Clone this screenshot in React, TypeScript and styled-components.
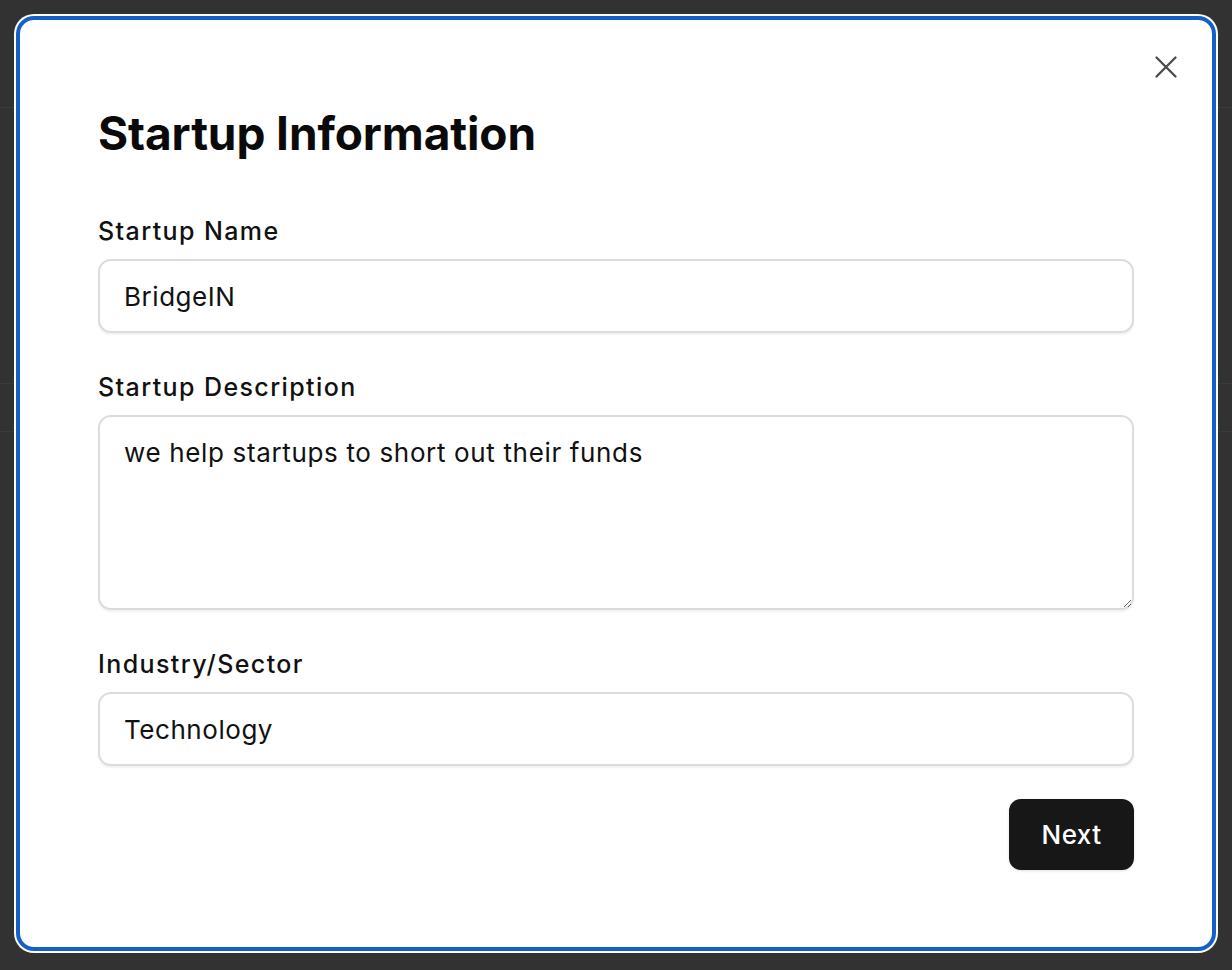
import React from "react";
import styled, { createGlobalStyle } from "styled-components";

const GlobalStyle = createGlobalStyle`
  html, body {
    margin: 0;
    padding: 0;
  }
  body {
    background-color: #323232;
    background-image:
      linear-gradient(#3a3a3a, #3a3a3a),
      linear-gradient(#3a3a3a, #3a3a3a),
      linear-gradient(#3a3a3a, #3a3a3a);
    background-size: 100% 1px;
    background-repeat: no-repeat;
    background-position: 0 107px, 0 383px, 0 431px;
    font-family: Inter, "Noto Sans", "Liberation Sans", sans-serif;
    -webkit-font-smoothing: antialiased;
  }
  * { box-sizing: border-box; }
`;

const Screen = styled.div`
  min-height: 970px;
  padding: 16px;
  display: flex;
  justify-content: center;
  align-items: flex-start;
`;

const Dialog = styled.div`
  position: relative;
  width: 1200px;
  height: 935px;
  background: #ffffff;
  border: 4px solid #1361c7;
  border-radius: 18px;
  box-shadow: 0 0 0 2px #ffffff;
  padding: 86px 78px 78px;
  display: flex;
  flex-direction: column;
`;

const CloseButton = styled.button`
  position: absolute;
  top: 28px;
  right: 27px;
  width: 38px;
  height: 38px;
  padding: 0;
  border: none;
  background: transparent;
  display: flex;
  align-items: center;
  justify-content: center;
  cursor: pointer;
  color: #4b4b4b;
`;

const Title = styled.h2`
  margin: 0 0 55px;
  font-size: 46px;
  line-height: 54px;
  font-weight: 700;
  color: #0a0a0a;
  letter-spacing: -0.1px;
`;

const Form = styled.form`
  display: flex;
  flex-direction: column;
  gap: 38px;
`;

const Field = styled.div`
  display: flex;
  flex-direction: column;
  gap: 12px;
`;

const Label = styled.label`
  font-size: 25px;
  line-height: 32px;
  font-weight: 500;
  letter-spacing: 1.4px;
  color: #111111;
`;

const TextInput = styled.input`
  width: 100%;
  height: 74px;
  padding: 0 24px;
  border: 2px solid #dcdcdc;
  border-radius: 13px;
  background: #ffffff;
  box-shadow: 0 1.5px 2px rgba(0, 0, 0, 0.06);
  font-family: inherit;
  font-size: 26px;
  letter-spacing: 0.55px;
  color: #111111;
  outline: none;
`;

const TextArea = styled.textarea`
  width: 100%;
  height: 195px;
  padding: 18px 24px;
  border: 2px solid #dcdcdc;
  border-radius: 13px;
  background: #ffffff;
  box-shadow: 0 1.5px 2px rgba(0, 0, 0, 0.06);
  font-family: inherit;
  font-size: 26px;
  line-height: 36px;
  letter-spacing: 0.65px;
  color: #111111;
  resize: vertical;
  outline: none;
  display: block;
`;

const Actions = styled.div`
  display: flex;
  justify-content: flex-end;
  margin-top: -5px;
`;

const PrimaryButton = styled.button`
  width: 125px;
  height: 71px;
  border: none;
  border-radius: 12px;
  background: #171717;
  color: #ffffff;
  font-family: inherit;
  font-size: 26px;
  font-weight: 500;
  letter-spacing: 0.4px;
  cursor: pointer;
  box-shadow: 0 1px 3px rgba(0, 0, 0, 0.12);
`;

export default function App() {
  return (
    <>
      <GlobalStyle />
      <Screen>
        <Dialog role="dialog" aria-labelledby="startup-title">
          <CloseButton type="button" aria-label="Close">
            <svg width="38" height="38" viewBox="0 0 38 38" fill="none">
              <path
                d="M9.5 9.5 L28.5 28.5 M28.5 9.5 L9.5 28.5"
                stroke="currentColor"
                strokeWidth="2.3"
                strokeLinecap="round"
              />
            </svg>
          </CloseButton>
          <Title id="startup-title">Startup Information</Title>
          <Form onSubmit={(e) => e.preventDefault()}>
            <Field>
              <Label htmlFor="name">Startup Name</Label>
              <TextInput id="name" defaultValue="BridgeIN" />
            </Field>
            <Field>
              <Label htmlFor="desc">Startup Description</Label>
              <TextArea
                id="desc"
                defaultValue="we help startups to short out their funds"
              />
            </Field>
            <Field>
              <Label htmlFor="industry">Industry/Sector</Label>
              <TextInput id="industry" defaultValue="Technology" />
            </Field>
            <Actions>
              <PrimaryButton type="submit">Next</PrimaryButton>
            </Actions>
          </Form>
        </Dialog>
      </Screen>
    </>
  );
}
